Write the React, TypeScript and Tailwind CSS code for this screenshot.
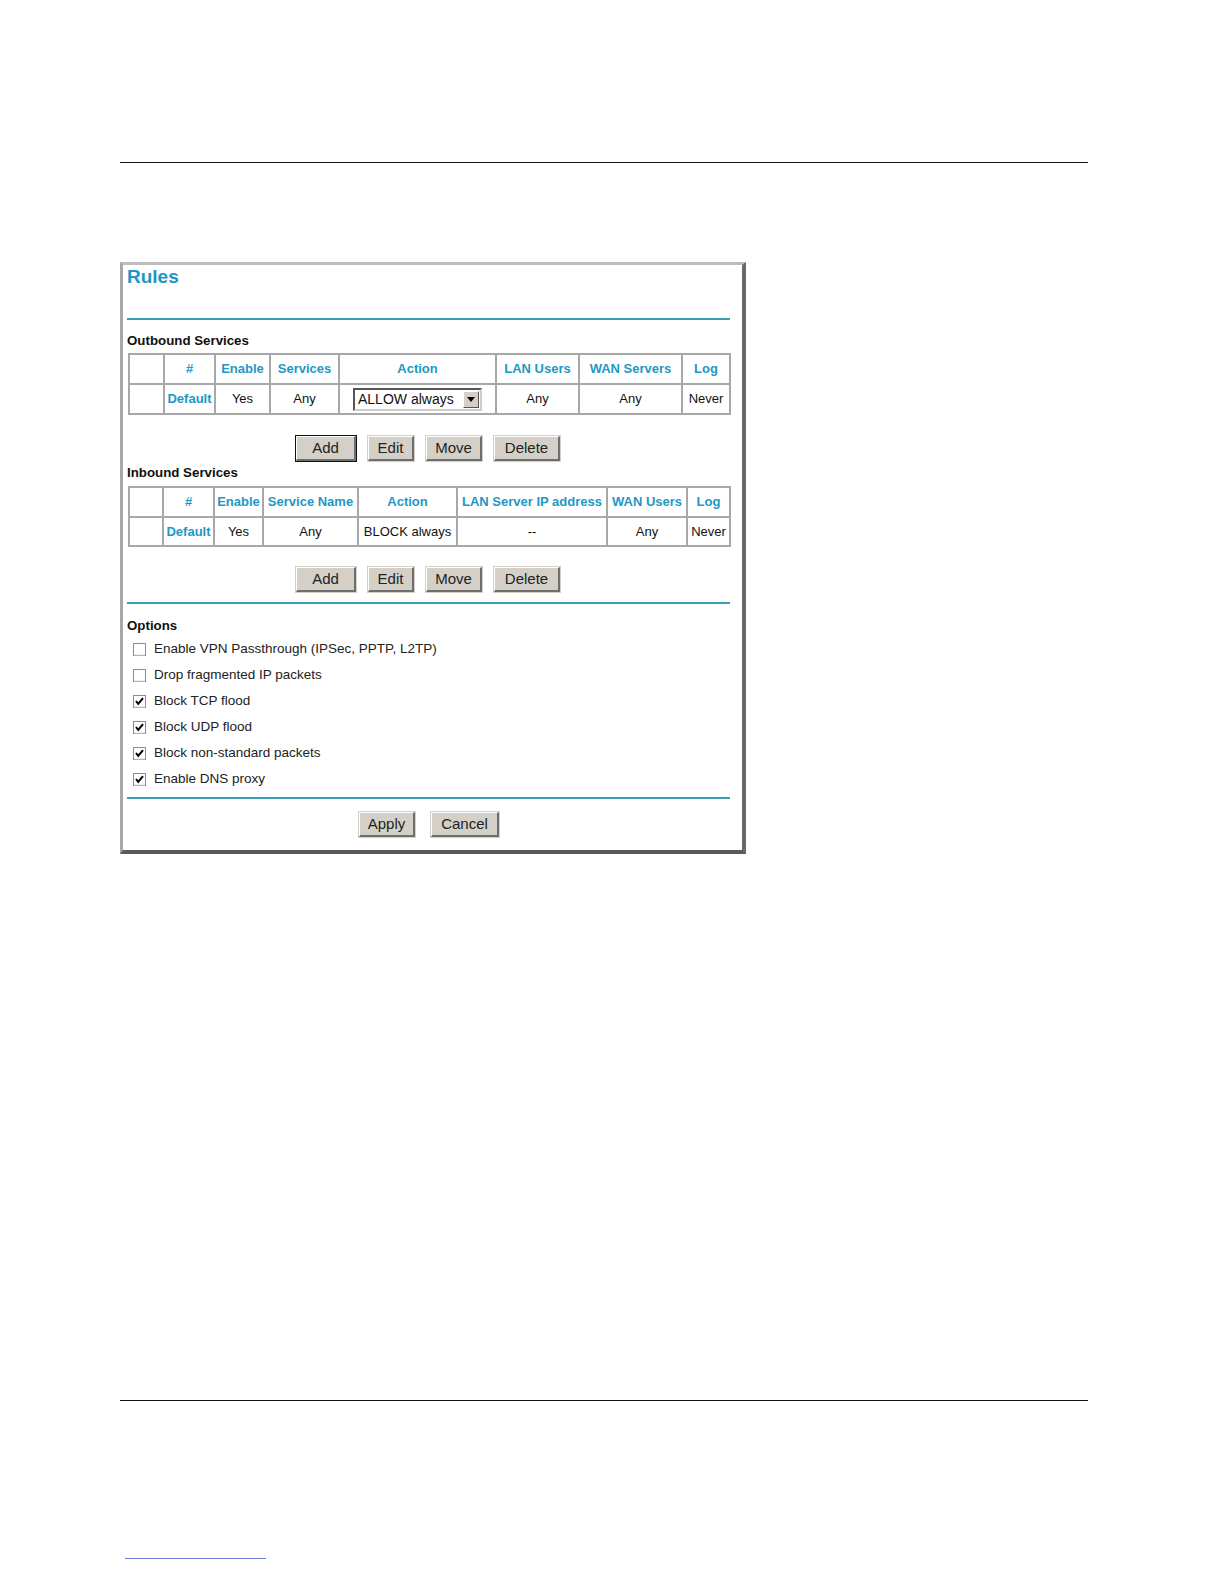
import React from "react";

const teal = "text-[#1e98c4]";

type Col = { label: string; w: number };

const outCols: Col[] = [
  { label: "", w: 35 },
  { label: "#", w: 51 },
  { label: "Enable", w: 55 },
  { label: "Services", w: 69 },
  { label: "Action", w: 157 },
  { label: "LAN Users", w: 83 },
  { label: "WAN Servers", w: 103 },
  { label: "Log", w: 48 },
];

const inCols: Col[] = [
  { label: "", w: 34 },
  { label: "#", w: 51 },
  { label: "Enable", w: 49 },
  { label: "Service Name", w: 95 },
  { label: "Action", w: 99 },
  { label: "LAN Server IP address", w: 150 },
  { label: "WAN Users", w: 80 },
  { label: "Log", w: 43 },
];

function WinButton({ label, w, isDefault }: { label: string; w: number; isDefault?: boolean }) {
  return (
    <div
      className={
        "flex h-[27px] items-center justify-center bg-[#d4d0c8] text-[15px] text-[#222] " +
        (isDefault ? "border border-[#111]" : "border border-transparent")
      }
      style={{ width: w }}
    >
      <div className="flex h-full w-full items-center justify-center border-t border-l border-white border-r-2 border-b-2 border-r-[#6e6e6e] border-b-[#6e6e6e]">
        {label}
      </div>
    </div>
  );
}

function ButtonRow({ first }: { first?: boolean }) {
  return (
    <div className="flex pl-[168px]">
      <WinButton label="Add" w={62} isDefault={first} />
      <div className="w-[10px]" />
      <WinButton label="Edit" w={48} />
      <div className="w-[10px]" />
      <WinButton label="Move" w={58} />
      <div className="w-[10px]" />
      <WinButton label="Delete" w={68} />
    </div>
  );
}

function HeaderRow({ cols }: { cols: Col[] }) {
  return (
    <tr className="h-[30px]">
      {cols.map((c, i) => (
        <th
          key={i}
          className={"border-2 border-[#a8a8a8] p-0 text-center text-[13px] font-bold " + teal}
          style={{ width: c.w }}
        >
          {c.label}
        </th>
      ))}
    </tr>
  );
}

function Cell({ children, bold }: { children?: React.ReactNode; bold?: boolean }) {
  return (
    <td
      className={
        "border-2 border-[#a8a8a8] p-0 text-center text-[13px] " +
        (bold ? "font-bold " + teal : "text-[#111]")
      }
    >
      {children}
    </td>
  );
}

function Select() {
  return (
    <div className="mx-auto flex h-[23px] w-[129px] items-center border-2 border-t-[#555] border-l-[#555] border-r-[#ccc] border-b-[#ccc] bg-white">
      <span className="flex-1 pl-[3px] text-left text-[14px] text-[#111]">ALLOW always</span>
      <div className="mr-[1px] flex h-[17px] w-[16px] items-center justify-center border border-t-white border-l-white border-r-[#555] border-b-[#555] bg-[#d4d0c8]">
        <svg width="8" height="5" viewBox="0 0 8 5">
          <polygon points="0,0 8,0 4,5" fill="#000" />
        </svg>
      </div>
    </div>
  );
}

function Check({ checked }: { checked: boolean }) {
  return (
    <svg width="13" height="13" viewBox="0 0 13 13" className="shrink-0">
      <rect x="0.5" y="0.5" width="12" height="12" fill="#fff" stroke="#8c8c8c" />
      <line x1="1" y1="12" x2="12" y2="12" stroke="#dcdcdc" />
      {checked && <polyline points="3,6 5.2,8.8 10,3.2" fill="none" stroke="#000" strokeWidth="2" />}
    </svg>
  );
}

const options: [string, boolean][] = [
  ["Enable VPN Passthrough (IPSec, PPTP, L2TP)", false],
  ["Drop fragmented IP packets", false],
  ["Block TCP flood", true],
  ["Block UDP flood", true],
  ["Block non-standard packets", true],
  ["Enable DNS proxy", true],
];

function TealRule() {
  return <div className="h-[2px] w-[603px] bg-[#3b9fb4]" />;
}

export default function App() {
  return (
    <div className="relative h-screen w-full overflow-hidden bg-white" style={{ fontFamily: '"Liberation Sans", Arial, sans-serif' }}>
      <div className="h-[162px]" />
      <div className="ml-[120px] h-px w-[968px] bg-[#111]" />

      <div className="ml-[120px] mt-[99px] w-[626px] border-t-[3px] border-l-[3px] border-t-[#bdbdbd] border-l-[#a8a8a8] border-r-[4px] border-b-[4px] border-r-[#6a6a6a] border-b-[#5a5a5a] bg-white pl-[4px]">
        <div className="pt-[1px] text-[19px] font-bold leading-[22px] text-[#2196c6]">Rules</div>
        <div className="h-[30px]" />
        <TealRule />
        <div className="mt-[13px] text-[13.3px] font-bold leading-[16px] text-[#111]">Outbound Services</div>
        <table className="mt-[4px] ml-[1px] w-[601px] border-collapse table-fixed">
          <thead>
            <HeaderRow cols={outCols} />
          </thead>
          <tbody>
            <tr className="h-[30px]">
              <Cell />
              <Cell bold>Default</Cell>
              <Cell>Yes</Cell>
              <Cell>Any</Cell>
              <Cell>
                <Select />
              </Cell>
              <Cell>Any</Cell>
              <Cell>Any</Cell>
              <Cell>Never</Cell>
            </tr>
          </tbody>
        </table>

        <div className="mt-[20px]">
          <ButtonRow first />
        </div>
        <div className="mt-[3px] text-[13.3px] font-bold leading-[16px] text-[#111]">Inbound Services</div>
        <table className="mt-[5px] ml-[1px] w-[601px] border-collapse table-fixed">
          <thead>
            <HeaderRow cols={inCols} />
          </thead>
          <tbody>
            <tr className="h-[29px]">
              <Cell />
              <Cell bold>Default</Cell>
              <Cell>Yes</Cell>
              <Cell>Any</Cell>
              <Cell>BLOCK always</Cell>
              <Cell>--</Cell>
              <Cell>Any</Cell>
              <Cell>Never</Cell>
            </tr>
          </tbody>
        </table>

        <div className="mt-[19px]">
          <ButtonRow />
        </div>
        <div className="mt-[9px]">
          <TealRule />
        </div>
        <div className="mt-[14px] text-[13.3px] font-bold leading-[16px] text-[#111]">Options</div>
        <div className="mt-[2px] flex flex-col">
          {options.map(([label, checked]) => (
            <div key={label} className="flex h-[26px] items-center pl-[6px]">
              <Check checked={checked} />
              <span className="ml-[8px] text-[13.5px] text-[#222]">{label}</span>
            </div>
          ))}
        </div>
        <div className="mt-[5px]">
          <TealRule />
        </div>
        <div className="mt-[12px] flex pb-[12px] pl-[231px]">
          <WinButton label="Apply" w={58} />
          <div className="w-[14px]" />
          <WinButton label="Cancel" w={70} />
        </div>
      </div>

      <div className="absolute left-[120px] top-[1400px] h-px w-[968px] bg-[#111]" />
      <div className="absolute left-[125px] top-[1558px] h-px w-[141px] bg-[#6b7fd6]" />
    </div>
  );
}
